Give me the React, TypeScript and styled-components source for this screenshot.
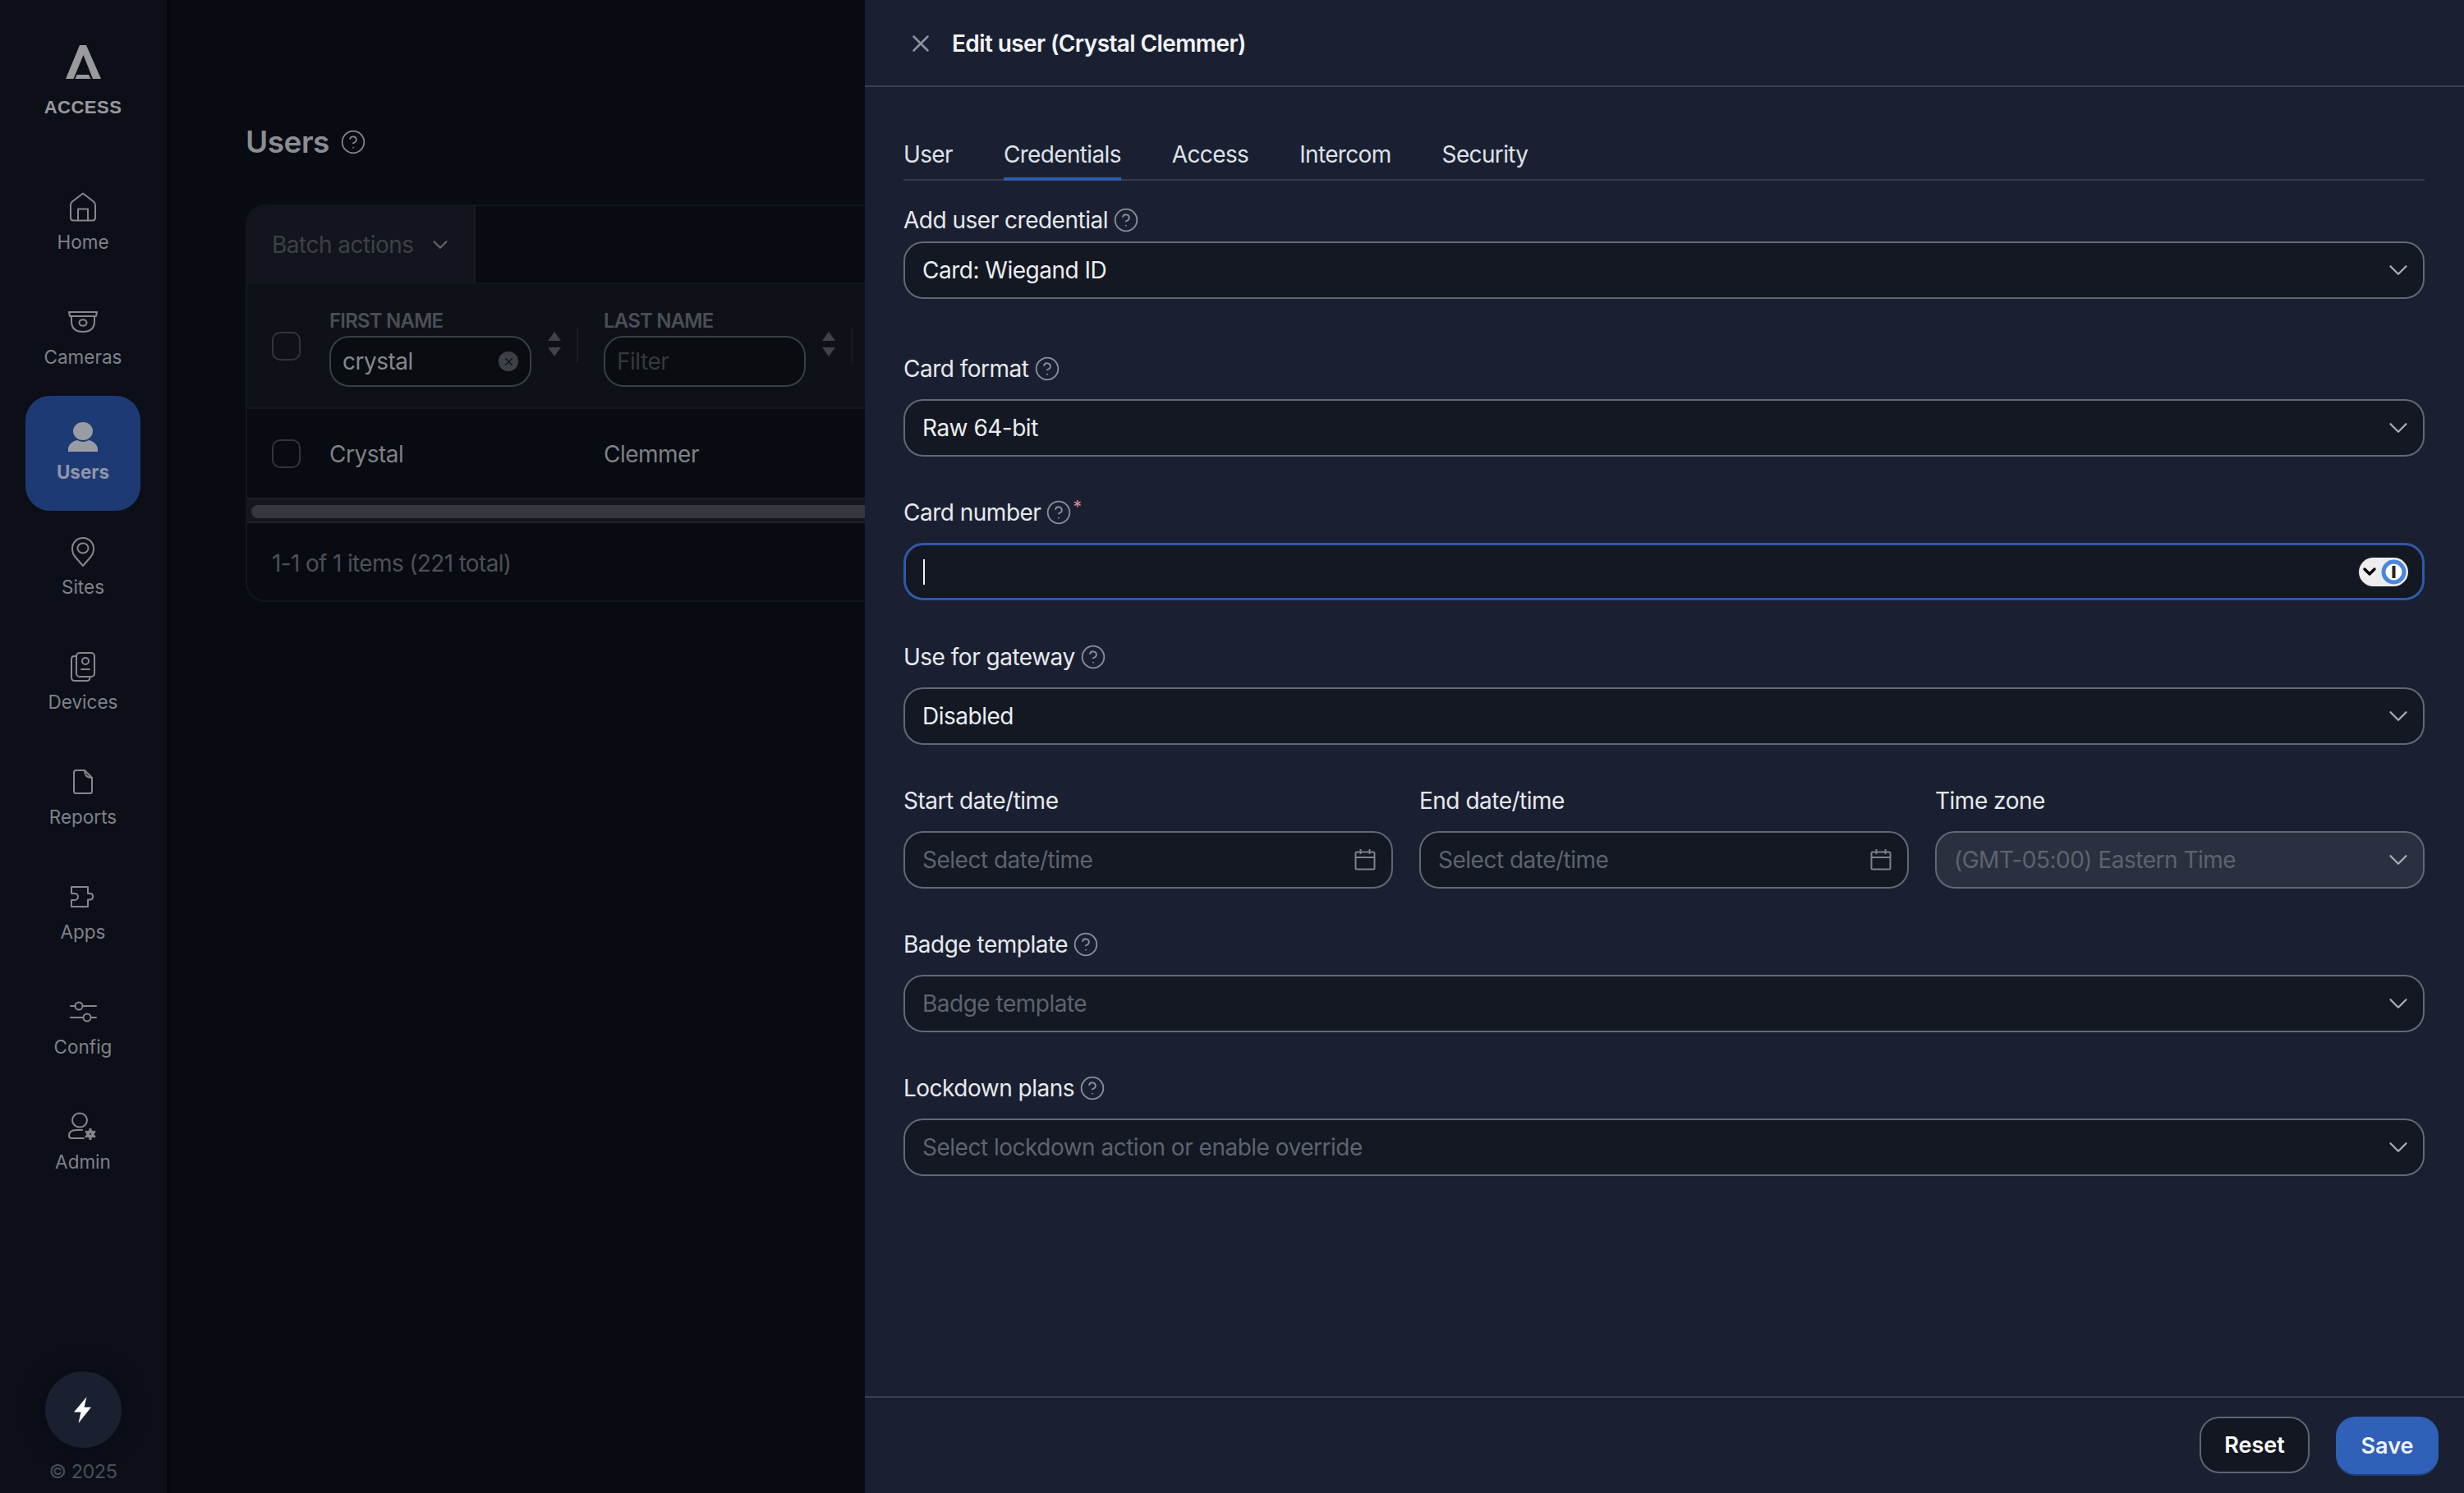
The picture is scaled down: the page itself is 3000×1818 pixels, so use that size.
import React from "react";
import styled, { createGlobalStyle } from "styled-components";
import { ChevronDown, CircleHelp, X } from "lucide-react";

const Global = createGlobalStyle`
  html, body { margin: 0; padding: 0; background: #080b11; height: 1818px; overflow: hidden; }
  body { width: 3000px; font-family: "Inter", "Liberation Sans", sans-serif; letter-spacing: -0.5px; }
  #root { height: 1818px; overflow: hidden; }
  * { box-sizing: border-box; }
`;

const Shell = styled.div`
  position: relative;
  display: flex;
  width: 3000px;
  height: 1818px;
  overflow: hidden;
  background: #080b11;
`;

const Sidebar = styled.aside`
  width: 206px;
  height: 1818px;
  flex: none;
  display: flex;
  flex-direction: column;
  align-items: center;
  padding-right: 1px;
  background: #0c0f18;
  border-right: 3px solid #05070b;
`;

const Logo = styled.div`
  height: 202px;
  width: 100%;
  flex: none;
  display: flex;
  flex-direction: column;
  align-items: center;
  padding-top: 55px;
  color: #9a9a9c;
`;

const LogoText = styled.div`
  margin-top: 22px;
  font-family: "Liberation Sans", sans-serif;
  font-weight: 700;
  font-size: 22px;
  line-height: 26px;
  letter-spacing: 0.5px;
  color: #98999c;
`;

const NavItem = styled.div<{ $active?: boolean }>`
  width: 140px;
  height: 140px;
  flex: none;
  display: flex;
  flex-direction: column;
  align-items: center;
  justify-content: flex-start;
  padding-top: 30px;
  gap: 9px;
  border-radius: 30px;
  background: ${(p) => (p.$active ? "#1e3a75" : "transparent")};
  color: ${(p) => (p.$active ? "#999ca3" : "#85878e")};
`;

const NavIcon = styled.div`
  height: 40px;
  display: flex;
  align-items: center;
  justify-content: center;
`;

const NavLabel = styled.div<{ $active?: boolean }>`
  font-size: 22.5px;
  line-height: 28px;
  letter-spacing: 0;
  font-weight: ${(p) => (p.$active ? 700 : 400)};
  color: ${(p) => (p.$active ? "#8e97aa" : "#7f8289")};
`;

const SideFoot = styled.div`
  margin-top: auto;
  display: flex;
  flex-direction: column;
  align-items: center;
  padding-bottom: 11px;
`;

const Bolt = styled.div`
  width: 93px;
  height: 93px;
  border-radius: 50%;
  background: #1b2031;
  display: flex;
  align-items: center;
  justify-content: center;
  box-shadow: 0 0 30px rgba(0, 0, 0, 0.25);
`;

const Copy = styled.div`
  margin-top: 14px;
  font-size: 23.5px;
  line-height: 30px;
  color: #4a4e57;
`;

const Main = styled.main`
  flex: none;
  width: 2794px;
  padding: 148px 0 0 93px;
`;

const TitleRow = styled.div`
  display: flex;
  align-items: center;
  gap: 13px;
  height: 50px;
  color: #85888e;
`;

const Title = styled.h1`
  margin: 0;
  font-size: 37px;
  line-height: 50px;
  font-weight: 600;
  color: #8a8d92;
`;

const Card = styled.section`
  margin-top: 51px;
  width: 2400px;
  height: 484px;
  border: 2px solid #12161d;
  border-radius: 24px;
  overflow: hidden;
`;

const BatchBar = styled.div`
  height: 95px;
  border-bottom: 2px solid #12161d;
  display: flex;
`;

const BatchBtn = styled.div`
  width: 278px;
  display: flex;
  align-items: center;
  justify-content: space-between;
  padding: 0 26px 0 30px;
  background: #12151d;
  border-right: 2px solid #171b23;
  font-size: 28px;
  color: #3d4047;
`;

const HeadRow = styled.div`
  height: 152px;
  background: #0e1118;
  border-bottom: 2px solid #15181f;
  display: flex;
  position: relative;
`;

const CheckCell = styled.div`
  width: 100px;
  flex: none;
  display: flex;
  align-items: center;
  padding-left: 30px;
`;

const Check = styled.div`
  width: 35px;
  height: 35px;
  border: 2px solid #32353c;
  border-radius: 10px;
`;

const HeadCell = styled.div`
  width: 334px;
  flex: none;
  position: relative;
  padding-top: 31px;
`;

const HeadLabel = styled.div`
  font-size: 24px;
  line-height: 28px;
  font-weight: 600;
  letter-spacing: -0.8px;
  color: #4b4e55;
`;

const FilterBox = styled.div`
  margin-top: 4px;
  width: 246px;
  height: 62px;
  border: 2px solid #3a3e46;
  border-radius: 24px;
  background: #090c11;
  display: flex;
  align-items: center;
  justify-content: space-between;
  padding: 0 14px;
  font-size: 28px;
`;

const FilterText = styled.span<{ $placeholder?: boolean }>`
  color: ${(p) => (p.$placeholder ? "#35383e" : "#85888d")};
`;

const ClearDot = styled.span`
  width: 24px;
  height: 24px;
  border-radius: 50%;
  background: #3d4047;
  color: #0e1118;
  display: flex;
  align-items: center;
  justify-content: center;
`;

const SortArrows = styled.div`
  position: absolute;
  left: 266px;
  top: 58px;
  color: #3f4248;
`;

const ColDivider = styled.div`
  position: absolute;
  left: 301px;
  top: 53px;
  width: 2px;
  height: 43px;
  background: #1a1d24;
`;

const BodyRow = styled.div`
  height: 108px;
  display: flex;
  align-items: center;
`;

const BodyCell = styled.div`
  width: 334px;
  flex: none;
  padding-top: 2px;
  font-size: 28px;
  color: #7e8186;
`;

const ScrollTrack = styled.div`
  height: 31px;
  padding: 7px 7px 6px 5px;
  background: #14171d;
  border-top: 2px solid #1a1d23;
  border-bottom: 2px solid #1f2228;
`;

const ScrollThumb = styled.div`
  height: 16px;
  border-radius: 8px;
  background: #35383d;
`;

const TableFoot = styled.div`
  padding: 32px 30px;
  font-size: 28px;
  line-height: 34px;
  letter-spacing: -0.65px;
  color: #4d5056;
`;

const Drawer = styled.div`
  position: absolute;
  top: 0;
  right: 0;
  bottom: 0;
  width: 1947px;
  background: #1a2032;
  display: flex;
  flex-direction: column;
`;

const DrawerHead = styled.header`
  height: 106px;
  flex: none;
  display: flex;
  align-items: center;
  gap: 21px;
  padding: 2px 0 0 51px;
  border-bottom: 2px solid #3a3f4e;
  color: #8f939e;
`;

const DrawerTitle = styled.div`
  font-size: 28px;
  line-height: 34px;
  font-weight: 600;
  letter-spacing: -0.6px;
  color: #f2f3f5;
`;

const DrawerBody = styled.div`
  flex: 1;
  padding: 0 48px 0 47px;
`;

const Tabs = styled.nav`
  height: 114px;
  display: flex;
  align-items: flex-end;
  gap: 62px;
  letter-spacing: -0.65px;
  border-bottom: 2px solid #363b4a;
`;

const Tab = styled.div<{ $active?: boolean }>`
  height: 50px;
  margin-bottom: -2px;
  font-size: 28px;
  line-height: 36px;
  color: #dfe1e6;
  border-bottom: 4px solid ${(p) => (p.$active ? "#2f5cb0" : "transparent")};
`;

const Field = styled.div<{ $first?: boolean }>`
  display: flex;
  flex-direction: column;
  gap: ${(p) => (p.$first ? 7 : 18)}px;
  margin-top: ${(p) => (p.$first ? 29 : 66)}px;
`;

const NextField = styled(Field)`
  margin-top: 49.25px;
`;

const Label = styled.div`
  height: 38px;
  display: flex;
  align-items: center;
  gap: 6px;
  font-size: 28px;
  color: #e8e9ec;
`;

const Required = styled.span`
  align-self: flex-start;
  margin-left: -5px;
  margin-top: -2px;
  font-size: 21px;
  line-height: 30px;
  color: #e08a96;
`;

const Control = styled.div<{ $focus?: boolean; $disabled?: boolean }>`
  height: 70px;
  display: flex;
  align-items: center;
  justify-content: space-between;
  padding: 0 19px 0 21px;
  border-radius: 24px;
  border: ${(p) => (p.$focus ? "3px solid #2f5aa8" : "2px solid #636874")};
  background: ${(p) => (p.$disabled ? "#2b3040" : "#131822")};
  font-size: 28px;
`;

const Value = styled.span<{ $muted?: boolean }>`
  color: ${(p) => (p.$muted ? "#5e636f" : "#eceef1")};
`;

const Caret = styled.span`
  width: 2px;
  height: 31px;
  background: #f0f0f0;
`;

const PassPill = styled.div`
  width: 60px;
  height: 35px;
  margin-right: -2px;
  border-radius: 18px;
  background: #ededed;
  display: flex;
  align-items: center;
  justify-content: flex-end;
  padding-right: 2px;
  color: #000;
  gap: 2px;
`;

const ChevronSlot = styled.span`
  display: flex;
  margin-right: -8px;
`;

const Row3 = styled.div`
  display: grid;
  grid-template-columns: repeat(3, 1fr);
  column-gap: 32px;
  margin-top: 49.25px;
`;

const RowField = styled(Field)`
  margin-top: 0;
`;

const DrawerFoot = styled.footer`
  height: 118px;
  flex: none;
  border-top: 2px solid #3a3f4e;
  display: flex;
  align-items: flex-start;
  justify-content: flex-end;
  gap: 32px;
  padding: 23px 31px 0 0;
`;

const ResetBtn = styled.div`
  width: 134px;
  height: 69px;
  border: 2px solid #5f6470;
  border-radius: 24px;
  background: #131722;
  display: flex;
  align-items: center;
  justify-content: center;
  font-size: 27px;
  font-weight: 600;
  letter-spacing: 0;
  color: #fff;
`;

const SaveBtn = styled(ResetBtn)`
  width: 125px;
  height: 70px;
  border: 0;
  background: #3060b8;
  box-shadow: 0 2px 0 #243f78;
  color: #eef3fb;
`;

const Chevron = () => (
  <ChevronSlot>
    <ChevronDown size={38} strokeWidth={1.5} color="#a9acb5" />
  </ChevronSlot>
);
const Help = () => <CircleHelp size={32} strokeWidth={1.4} color="#8b8f9a" />;

const Calendar = () => (
  <svg width="26" height="28" viewBox="0 0 26 28" fill="none" stroke="#7d818c" strokeWidth="2">
    <rect x="1.5" y="4.5" width="23" height="21" rx="1.5" />
    <path d="M1.5 11h23M7.5 1v6M18.5 1v6" />
  </svg>
);

const icon = { fill: "none", stroke: "currentColor", strokeWidth: 2, strokeLinecap: "round", strokeLinejoin: "round" } as const;

const navIcons: Record<string, React.ReactNode> = {
  Home: (
    <svg width="32" height="36" viewBox="0 0 32 36" {...icon}>
      <path d="M16 1.5 3 11.5Q1 13 1 16v15q0 3.500 3.500 3.500h23q3.500 0 3.500-3.500V16q0-3-2-4.500Z" />
      <path d="M10 34.500V20.500h12v14" />
    </svg>
  ),
  Cameras: (
    <svg width="36" height="28" viewBox="0 0 36 28" {...icon}>
      <path d="M1 2h34l-1 5H2Z" />
      <path d="M4 7v6q0 13 14 13t14-13V7" />
      <ellipse cx="18" cy="15" rx="4.500" ry="3.800" />
    </svg>
  ),
  Users: (
    <svg width="38" height="36" viewBox="0 0 38 36" fill="currentColor">
      <ellipse cx="19" cy="11" rx="12" ry="11" />
      <path d="M1 36v-3c0-6 6-10 11-11q7 4 14 0c5 1 11 5 11 11v3Z" />
    </svg>
  ),
  Sites: (
    <svg width="28" height="36" viewBox="0 0 28 36" {...icon}>
      <path d="M14 35 4.500 24C1.500 20.500 1 17.500 1 14A13 13 0 0 1 27 14c0 3.500-.5 6.500-3.500 10Z" />
      <ellipse cx="14" cy="13.500" rx="6.500" ry="6" />
    </svg>
  ),
  Devices: (
    <svg width="30" height="36" viewBox="0 0 30 36" {...icon}>
      <rect x="7" y="1" width="22" height="29" rx="4" />
      <path d="M7 5H4.500Q1 5 1 9v22q0 4 4 4h15q3.500 0 3.500-5" />
      <circle cx="18" cy="11" r="4" />
      <path d="M13 21h10" />
    </svg>
  ),
  Reports: (
    <svg width="24" height="30" viewBox="0 0 24 30" {...icon}>
      <path d="M3.500 1H14l9 9v16.500q0 2.500-2.500 2.500h-17Q1 29 1 26.500v-23Q1 1 3.500 1Z" />
      <path d="M14 1q0 9 9 9" />
    </svg>
  ),
  Apps: (
    <svg width="33" height="26" viewBox="0 0 33 26" {...icon}>
      <path d="M2 1h20v8h3.500a4 4 0 0 1 0 7.500H22V25H2v-8h4a4 4 0 0 0 0-8H2Z" />
    </svg>
  ),
  Config: (
    <svg width="33" height="26" viewBox="0 0 33 26" {...icon}>
      <path d="M1 6h5M16 6h16M1 20h15M26 20h6" />
      <circle cx="11" cy="6" r="4.500" />
      <circle cx="21" cy="20" r="4.500" />
    </svg>
  ),
  Admin: (
    <svg width="36" height="36" viewBox="0 0 36 36" {...icon}>
      <ellipse cx="14" cy="10" rx="9" ry="8.500" />
      <path d="M17 22H10Q1 22 1 29q0 3 3 3h15" />
      <circle cx="27" cy="27" r="3" fill="none" strokeWidth="4" />
      <path d="M27 20v2.500M27 31.500V34M21 23.500l2 1.200M31 29.300l2 1.200M21 30.500l2-1.200M31 24.700l2-1.200" strokeWidth="3" strokeLinecap="butt" />
    </svg>
  ),
};

const navNames = ["Home", "Cameras", "Users", "Sites", "Devices", "Reports", "Apps", "Config", "Admin"];

const SortIcon = () => (
  <svg width="16" height="32" viewBox="0 0 16 32" fill="currentColor">
    <path d="M8 0l8 11H0ZM0 19h16l-8 11Z" />
  </svg>
);

const SelectField = ({ label, value, muted, first }: { label: string; value: string; muted?: boolean; first?: boolean }) => {
  const Wrap = first ? Field : NextField;
  return (
    <Wrap $first={first}>
      <Label>
        {label}
        <Help />
      </Label>
      <Control>
        <Value $muted={muted}>{value}</Value>
        <Chevron />
      </Control>
    </Wrap>
  );
};

export default function App() {
  return (
    <Shell>
      <Global />
      <Sidebar>
        <Logo>
          <svg width="43" height="41" viewBox="0 0 43 41" fill="currentColor">
            <path d="M17 0h8l18 41H33L21.500 12 9.500 41H0Z" />
            <path d="M13.500 36H28l2.500 5h-19Z" />
          </svg>
          <LogoText>ACCESS</LogoText>
        </Logo>
        {navNames.map((name) => (
          <NavItem key={name} $active={name === "Users"}>
            <NavIcon>{navIcons[name]}</NavIcon>
            <NavLabel $active={name === "Users"}>{name}</NavLabel>
          </NavItem>
        ))}
        <SideFoot>
          <Bolt>
            <svg width="22" height="32" viewBox="0 0 22 32" fill="#fff">
              <path d="M15.500 0 0 18.500h8.500L5.500 32 21 12.500h-8.500Z" />
            </svg>
          </Bolt>
          <Copy>© 2025</Copy>
        </SideFoot>
      </Sidebar>

      <Main>
        <TitleRow>
          <Title>Users</Title>
          <CircleHelp size={32} strokeWidth={1.3} />
        </TitleRow>
        <Card>
          <BatchBar>
            <BatchBtn>
              Batch actions
              <ChevronDown size={30} strokeWidth={1.8} color="#63666c" />
            </BatchBtn>
          </BatchBar>
          <HeadRow>
            <CheckCell><Check /></CheckCell>
            <HeadCell>
              <HeadLabel>FIRST NAME</HeadLabel>
              <FilterBox>
                <FilterText>crystal</FilterText>
                <ClearDot><X size={15} strokeWidth={2} /></ClearDot>
              </FilterBox>
              <SortArrows><SortIcon /></SortArrows>
              <ColDivider />
            </HeadCell>
            <HeadCell>
              <HeadLabel>LAST NAME</HeadLabel>
              <FilterBox>
                <FilterText $placeholder>Filter</FilterText>
              </FilterBox>
              <SortArrows><SortIcon /></SortArrows>
              <ColDivider />
            </HeadCell>
          </HeadRow>
          <BodyRow>
            <CheckCell><Check /></CheckCell>
            <BodyCell>Crystal</BodyCell>
            <BodyCell>Clemmer</BodyCell>
          </BodyRow>
          <ScrollTrack><ScrollThumb /></ScrollTrack>
          <TableFoot>1-1 of 1 items (221 total)</TableFoot>
        </Card>
      </Main>

      <Drawer>
        <DrawerHead>
          <X size={34} strokeWidth={1.8} />
          <DrawerTitle>Edit user (Crystal Clemmer)</DrawerTitle>
        </DrawerHead>
        <DrawerBody>
          <Tabs>
            <Tab>User</Tab>
            <Tab $active>Credentials</Tab>
            <Tab>Access</Tab>
            <Tab>Intercom</Tab>
            <Tab>Security</Tab>
          </Tabs>
          <SelectField first label="Add user credential" value="Card: Wiegand ID" />
          <Field>
            <Label>Card format<Help /></Label>
            <Control>
              <Value>Raw 64-bit</Value>
              <Chevron />
            </Control>
          </Field>
          <NextField>
            <Label>Card number<Help /><Required>*</Required></Label>
            <Control $focus>
              <Caret />
              <PassPill>
                <ChevronDown size={24} strokeWidth={3.4} />
                <svg width="31" height="31" viewBox="0 0 31 31">
                  <circle cx="15.500" cy="15.500" r="12.500" fill="#fff" stroke="#4a86dd" strokeWidth="5" />
                  <rect x="13.500" y="8" width="4" height="15" fill="#222" />
                </svg>
              </PassPill>
            </Control>
          </NextField>
          <SelectField label="Use for gateway" value="Disabled" />
          <Row3>
            <RowField>
              <Label>Start date/time</Label>
              <Control>
                <Value $muted>Select date/time</Value>
                <Calendar />
              </Control>
            </RowField>
            <RowField>
              <Label>End date/time</Label>
              <Control>
                <Value $muted>Select date/time</Value>
                <Calendar />
              </Control>
            </RowField>
            <RowField>
              <Label>Time zone</Label>
              <Control $disabled>
                <Value $muted>(GMT-05:00) Eastern Time</Value>
                <Chevron />
              </Control>
            </RowField>
          </Row3>
          <SelectField label="Badge template" value="Badge template" muted />
          <SelectField label="Lockdown plans" value="Select lockdown action or enable override" muted />
        </DrawerBody>
        <DrawerFoot>
          <ResetBtn>Reset</ResetBtn>
          <SaveBtn>Save</SaveBtn>
        </DrawerFoot>
      </Drawer>
    </Shell>
  );
}
